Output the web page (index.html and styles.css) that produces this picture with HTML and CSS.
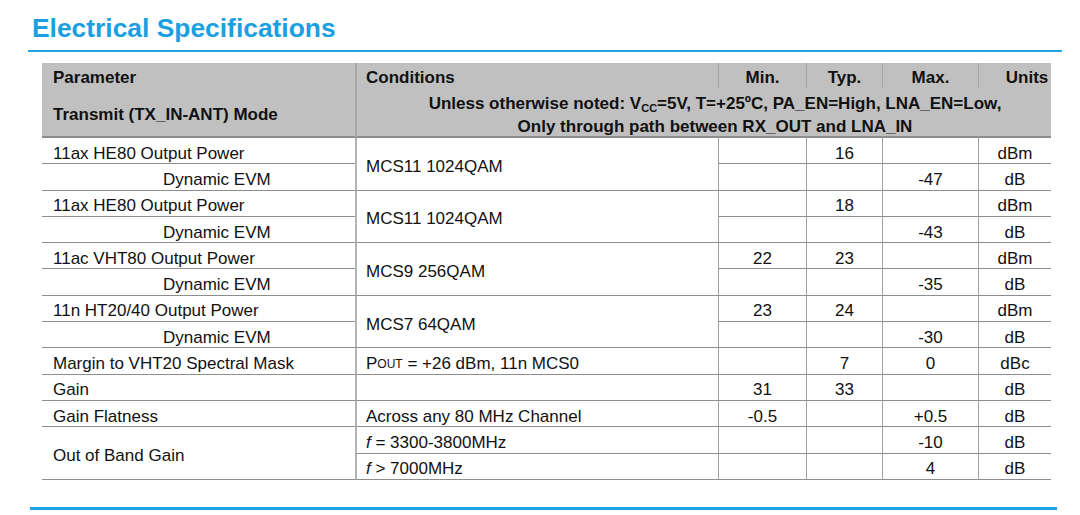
FILE: index.html
```html
<!DOCTYPE html>
<html lang="en">
<head>
<meta charset="utf-8">
<title>Electrical Specifications</title>
<link rel="stylesheet" href="styles.css">
</head>
<body>
<header class="title-bar">
  <h1 class="title">Electrical Specifications</h1>
</header>

<div class="spec">
  <div class="h h-first">Parameter</div>
  <div class="h h-cond">Conditions</div>
  <div class="h h-num">Min.</div>
  <div class="h h-num">Typ.</div>
  <div class="h h-num">Max.</div>
  <div class="h h-num h-units">Units</div>

  <div class="h h2 h-first">Transmit (TX_IN-ANT) Mode</div>
  <div class="h h2 h-note">
    <span>Unless otherwise noted: V<sub class="sub">CC</sub>=5V, T=+25ºC, PA_EN=High, LNA_EN=Low,</span>
    <span>Only through path between RX_OUT and LNA_IN</span>
  </div>

  <!-- group 1 -->
  <div class="c p">11ax HE80 Output Power</div>
  <div class="c cond span2">MCS11 1024QAM</div>
  <div class="c n"></div><div class="c n">16</div><div class="c n"></div><div class="c n">dBm</div>
  <div class="c p ind">Dynamic EVM</div>
  <div class="c n"></div><div class="c n"></div><div class="c n">-47</div><div class="c n">dB</div>

  <!-- group 2 -->
  <div class="c p">11ax HE80 Output Power</div>
  <div class="c cond span2">MCS11 1024QAM</div>
  <div class="c n"></div><div class="c n">18</div><div class="c n"></div><div class="c n">dBm</div>
  <div class="c p ind">Dynamic EVM</div>
  <div class="c n"></div><div class="c n"></div><div class="c n">-43</div><div class="c n">dB</div>

  <!-- group 3 -->
  <div class="c p">11ac VHT80 Output Power</div>
  <div class="c cond span2">MCS9 256QAM</div>
  <div class="c n">22</div><div class="c n">23</div><div class="c n"></div><div class="c n">dBm</div>
  <div class="c p ind">Dynamic EVM</div>
  <div class="c n"></div><div class="c n"></div><div class="c n">-35</div><div class="c n">dB</div>

  <!-- group 4 -->
  <div class="c p">11n HT20/40 Output Power</div>
  <div class="c cond span2">MCS7 64QAM</div>
  <div class="c n">23</div><div class="c n">24</div><div class="c n"></div><div class="c n">dBm</div>
  <div class="c p ind">Dynamic EVM</div>
  <div class="c n"></div><div class="c n"></div><div class="c n">-30</div><div class="c n">dB</div>

  <div class="c p">Margin to VHT20 Spectral Mask</div>
  <div class="c cond">P<sub class="sub sub-out">OUT</sub>&nbsp;= +26 dBm, 11n MCS0</div>
  <div class="c n"></div><div class="c n">7</div><div class="c n">0</div><div class="c n">dBc</div>

  <div class="c p">Gain</div>
  <div class="c cond"></div>
  <div class="c n">31</div><div class="c n">33</div><div class="c n"></div><div class="c n">dB</div>

  <div class="c p">Gain Flatness</div>
  <div class="c cond">Across any 80 MHz Channel</div>
  <div class="c n">-0.5</div><div class="c n"></div><div class="c n">+0.5</div><div class="c n">dB</div>

  <div class="c p span2">Out of Band Gain</div>
  <div class="c cond"><i>f</i>&nbsp;= 3300-3800MHz</div>
  <div class="c n"></div><div class="c n"></div><div class="c n">-10</div><div class="c n">dB</div>
  <div class="c cond"><i>f</i>&nbsp;&gt; 7000MHz</div>
  <div class="c n"></div><div class="c n"></div><div class="c n">4</div><div class="c n">dB</div>
</div>

<div class="foot-rule"></div>
</body>
</html>
```

FILE: styles.css
```css
html, body {
  margin: 0;
  padding: 0;
  background: #ffffff;
}

body {
  font-family: "Liberation Sans", Arial, sans-serif;
  color: #111111;
  width: 1080px;
  height: 515px;
  overflow: hidden;
}

.title-bar {
  margin: 0 18px 0 28px;
  padding: 13px 0 7px 4px;
  border-bottom: 2px solid #1ea4e6;
}

.title {
  margin: 0;
  font-size: 26.4px;
  line-height: 30px;
  font-weight: bold;
  color: #1a9fe1;
}

.spec {
  margin: 11px 0 0 42px;
  display: grid;
  grid-template-columns: 313px 363px 88px 76px 96px 73px;
  grid-template-rows: 25px 50px;
  grid-auto-rows: 26.3px;
  font-size: 17px;
}

.h {
  background: #c0c0c0;
  font-weight: bold;
  display: flex;
  align-items: center;
  box-sizing: border-box;
  line-height: 20px;
  padding-top: 5px;
}

.h-first {
  padding-left: 11px;
}

.h-cond {
  padding-left: 9px;
  border-left: 2px solid #a8a8a8;
}

.h-num {
  justify-content: center;
  border-left: 1px solid #a4a4a4;
}

.h-units {
  padding-left: 24px;
}

.h2 {
  border-bottom: 2px solid #8c8c8c;
}

.h-note {
  grid-column: span 5;
  border-left: 2px solid #a8a8a8;
  flex-direction: column;
  justify-content: center;
  padding-left: 22px;
  line-height: 23px;
}

.sub {
  font-size: 11px;
  vertical-align: -3px;
  line-height: 0;
}

.sub-out {
  font-size: 12px;
}

.c {
  box-sizing: border-box;
  border-bottom: 1px solid #8e8e8e;
  display: flex;
  align-items: center;
  line-height: 18px;
  white-space: nowrap;
  padding-top: 6px;
}

.p {
  padding-left: 11px;
}

.p.ind {
  padding-left: 121px;
}

.cond {
  border-left: 2px solid #b4b4b4;
  padding-left: 9px;
}

.n {
  justify-content: center;
  border-left: 1px solid #a0a0a0;
}

.span2 {
  grid-row: span 2;
}

.foot-rule {
  margin: 27px 0 0 30px;
  width: 1027px;
  height: 3px;
  background: #1ea4e6;
}
```
